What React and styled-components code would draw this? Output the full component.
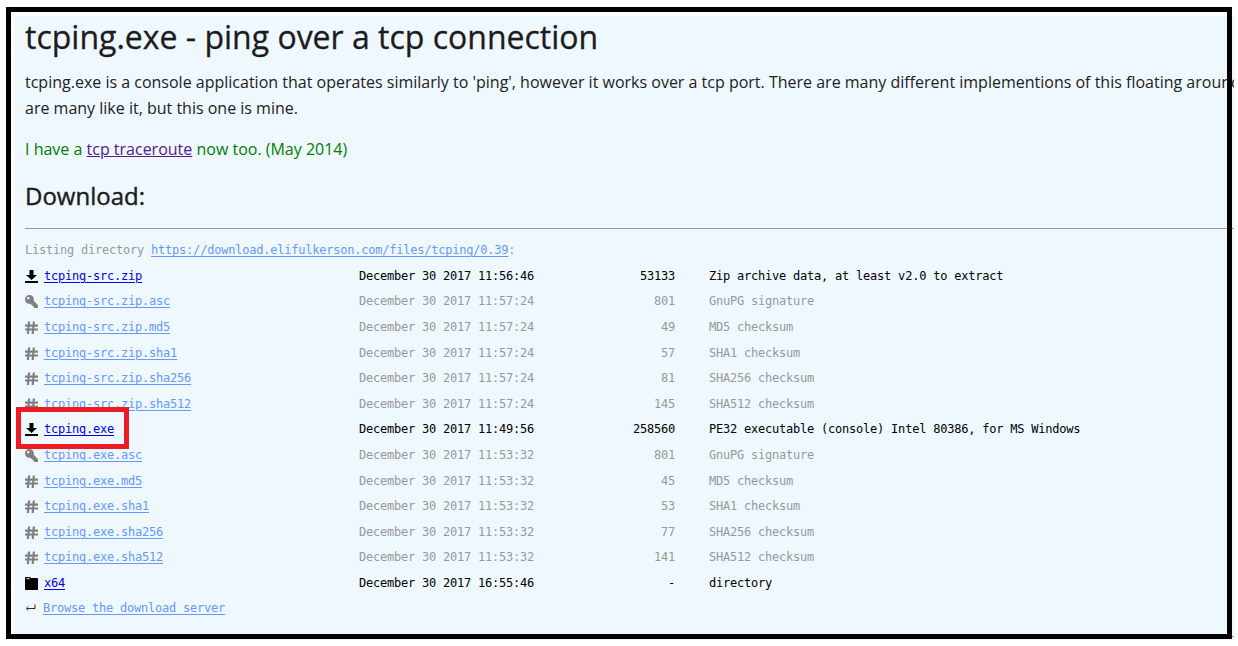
import React from 'react';
import styled, { createGlobalStyle } from 'styled-components';
import { FaKey } from 'react-icons/fa';

const GlobalStyle = createGlobalStyle`
  html, body {
    margin: 0;
    padding: 0;
    background: #fff;
  }
`

const mono = `"DejaVu Sans Mono", "Liberation Mono", monospace`

const Page = styled.div`
  width: 1238px;
  height: 646px;
  padding: 7px 6px;
  box-sizing: border-box;
  overflow: hidden;
`

// the black rectangle is drawn over the page, the panel runs a bit past it on the right
const Frame = styled.div`
  position: relative;
  width: 1226px;
  height: 632px;
  box-sizing: border-box;
  padding: 9px 0 0 9px;

  &::after {
    content: '';
    position: absolute;
    inset: 0;
    border: 5px solid #000;
    pointer-events: none;
  }
`

const Panel = styled.div`
  width: 1219px;
  height: 624px;
  background: #eff7ff;
  overflow: hidden;
  padding: 0 0 0 10px;
  box-sizing: border-box;
  color: #222;
  font-family: "Open Sans", sans-serif;
`

const Content = styled.div`
  width: 1300px;
`

const Title = styled.h1`
  margin: 0;
  font-size: 32px;
  line-height: 42px;
  font-weight: 500;
  color: #1c1c1c;
  -webkit-text-stroke: 0.3px #1c1c1c;
`

const Para = styled.p`
  margin: ${p => p.$mt || 0}px 0 0;
  font-size: 16px;
  line-height: 26px;
  white-space: nowrap;
  color: ${p => p.$color || '#222'};
`

const TraceLink = styled.a`
  color: #551a8b;
  text-decoration: underline;
`

const Heading = styled.h2`
  margin: 17px 0 0;
  font-size: 24px;
  line-height: 34px;
  font-weight: 500;
  color: #1c1c1c;
  -webkit-text-stroke: 0.4px #1c1c1c;
`

const Rule = styled.hr`
  margin: ${p => p.$mt || 15}px 0 0;
  border: 0;
  height: 1px;
  background: #999;
`

const Listing = styled.div`
  margin-top: 14px;
  font-family: ${mono};
  font-size: 12px;
  letter-spacing: -0.22px;
  line-height: 15px;
  color: #999;
`

const ListingHead = styled.div`
  margin-bottom: 5.6px;
`

const Link = styled.a`
  color: ${p => p.$strong ? '#0000ee' : '#6699ff'};
  text-decoration: underline;
  text-underline-offset: 2px;
`

const Row = styled.div`
  display: grid;
  grid-template-columns: 19px 315px 175px 141px 1fr;
  height: 25.6px;
  align-items: center;
  white-space: pre;
  color: ${p => p.$strong ? '#000' : '#999'};
`

const IconCell = styled.span`
  display: flex;
  align-items: center;
  color: ${p => p.$strong ? '#000' : '#808080'};
`

const Size = styled.span`
  text-align: right;
`

const Desc = styled.span`
  padding-left: 34px;
`

const BackRow = styled.div`
  display: flex;
  align-items: center;
  height: 25px;
  gap: 7px;
  margin-top: -0.6px;
`

const FlippedKey = styled(FaKey)`
  width: 13px;
  height: 13px;
  transform: scaleX(-1);
`

const RedBox = styled.div`
  position: absolute;
  left: 10px;
  top: 400px;
  width: 113px;
  height: 42px;
  box-sizing: border-box;
  border: 5px solid #ed1c24;
  pointer-events: none;
`

const DownloadIcon = () => (
  <svg width="13" height="13" viewBox="0 0 13 13" fill="currentColor">
    <path d="M4.5 0h4v5H12L6.5 10 1 5h3.5z" />
    <rect x="0" y="11" width="13" height="2" />
  </svg>
)

const HashIcon = () => (
  <svg width="13" height="13" viewBox="0 0 13 13" fill="currentColor">
    <path d="M3 0.5h2.2L4.9 3.5h2.6l.3-3H10L9.7 3.5H13v2.2H9.5L9.3 7.4H13v2.2H9.1L8.8 13H6.6l.3-3.4H4.3L4 13H1.8l.3-3.4H0V7.4h2.3l.2-1.7H0V3.5h2.7zM4.7 5.7l-.2 1.7h2.6l.2-1.7z" fillRule="evenodd" />
  </svg>
)

const FolderIcon = () => (
  <svg width="13" height="13" viewBox="0 0 13 13" fill="currentColor">
    <path d="M0 1.2C0 .5.5 0 1.2 0h3.4c.7 0 1 .4 1.2 1h6c.7 0 1.2.4 1.2 1.2V12c0 .6-.4 1-1 1H1c-.6 0-1-.4-1-1z" />
    <rect x="1.5" y="1.2" width="3.2" height="1" fill="#eff7ff" />
  </svg>
)

const BackIcon = () => (
  <svg width="11" height="9" viewBox="0 0 11 9" fill="none">
    <path d="M10 0.5V4.5H2" stroke="#2b2b2b" strokeWidth="1" />
    <path d="M3.5 2.5L1 4.5l2.5 2" stroke="#2b66c4" strokeWidth="1" />
    <path d="M10 0.5V2" stroke="#c98a3a" strokeWidth="1" />
  </svg>
)

const icons = {
  download: DownloadIcon,
  key: FlippedKey,
  hash: HashIcon,
  folder: FolderIcon,
}

const files = [
  { icon: 'download', strong: true, name: 'tcping-src.zip', date: 'December 30 2017 11:56:46', size: '53133', desc: 'Zip archive data, at least v2.0 to extract' },
  { icon: 'key', name: 'tcping-src.zip.asc', date: 'December 30 2017 11:57:24', size: '801', desc: 'GnuPG signature' },
  { icon: 'hash', name: 'tcping-src.zip.md5', date: 'December 30 2017 11:57:24', size: '49', desc: 'MD5 checksum' },
  { icon: 'hash', name: 'tcping-src.zip.sha1', date: 'December 30 2017 11:57:24', size: '57', desc: 'SHA1 checksum' },
  { icon: 'hash', name: 'tcping-src.zip.sha256', date: 'December 30 2017 11:57:24', size: '81', desc: 'SHA256 checksum' },
  { icon: 'hash', name: 'tcping-src.zip.sha512', date: 'December 30 2017 11:57:24', size: '145', desc: 'SHA512 checksum' },
  { icon: 'download', strong: true, name: 'tcping.exe', date: 'December 30 2017 11:49:56', size: '258560', desc: 'PE32 executable (console) Intel 80386, for MS Windows' },
  { icon: 'key', name: 'tcping.exe.asc', date: 'December 30 2017 11:53:32', size: '801', desc: 'GnuPG signature' },
  { icon: 'hash', name: 'tcping.exe.md5', date: 'December 30 2017 11:53:32', size: '45', desc: 'MD5 checksum' },
  { icon: 'hash', name: 'tcping.exe.sha1', date: 'December 30 2017 11:53:32', size: '53', desc: 'SHA1 checksum' },
  { icon: 'hash', name: 'tcping.exe.sha256', date: 'December 30 2017 11:53:32', size: '77', desc: 'SHA256 checksum' },
  { icon: 'hash', name: 'tcping.exe.sha512', date: 'December 30 2017 11:53:32', size: '141', desc: 'SHA512 checksum' },
  { icon: 'folder', strong: true, name: 'x64', date: 'December 30 2017 16:55:46', size: '-', desc: 'directory' },
]

export default function App() {
  return (
    <Page>
      <GlobalStyle />
      <Frame>
        <Panel>
          <Content>
            <Title>tcping.exe - ping over a tcp connection</Title>
            <Para $mt={11}>
              tcping.exe is a console application that operates similarly to 'ping', however it works over a tcp port. There are many different implementions of this floating around
              <br />
              are many like it, but this one is mine.
            </Para>
            <Para $mt={15} $color="#008000">
              I have a <TraceLink href="#">tcp traceroute</TraceLink> now too. (May 2014)
            </Para>
            <Heading>Download:</Heading>
            <Rule />
            <Listing>
              <ListingHead>Listing directory <Link href="#">https://download.elifulkerson.com/files/tcping/0.39</Link>:</ListingHead>
              {files.map(f => {
                const Icon = icons[f.icon]
                return (
                  <Row key={f.name} $strong={f.strong}>
                    <IconCell $strong={f.strong}><Icon /></IconCell>
                    <span><Link href="#" $strong={f.strong}>{f.name}</Link></span>
                    <span>{f.date}</span>
                    <Size>{f.size}</Size>
                    <Desc>{f.desc}</Desc>
                  </Row>
                )
              })}
              <BackRow>
                <BackIcon />
                <Link href="#">Browse the download server</Link>
              </BackRow>
            </Listing>
            <Rule $mt={15} />
          </Content>
        </Panel>
        <RedBox />
      </Frame>
    </Page>
  )
}
